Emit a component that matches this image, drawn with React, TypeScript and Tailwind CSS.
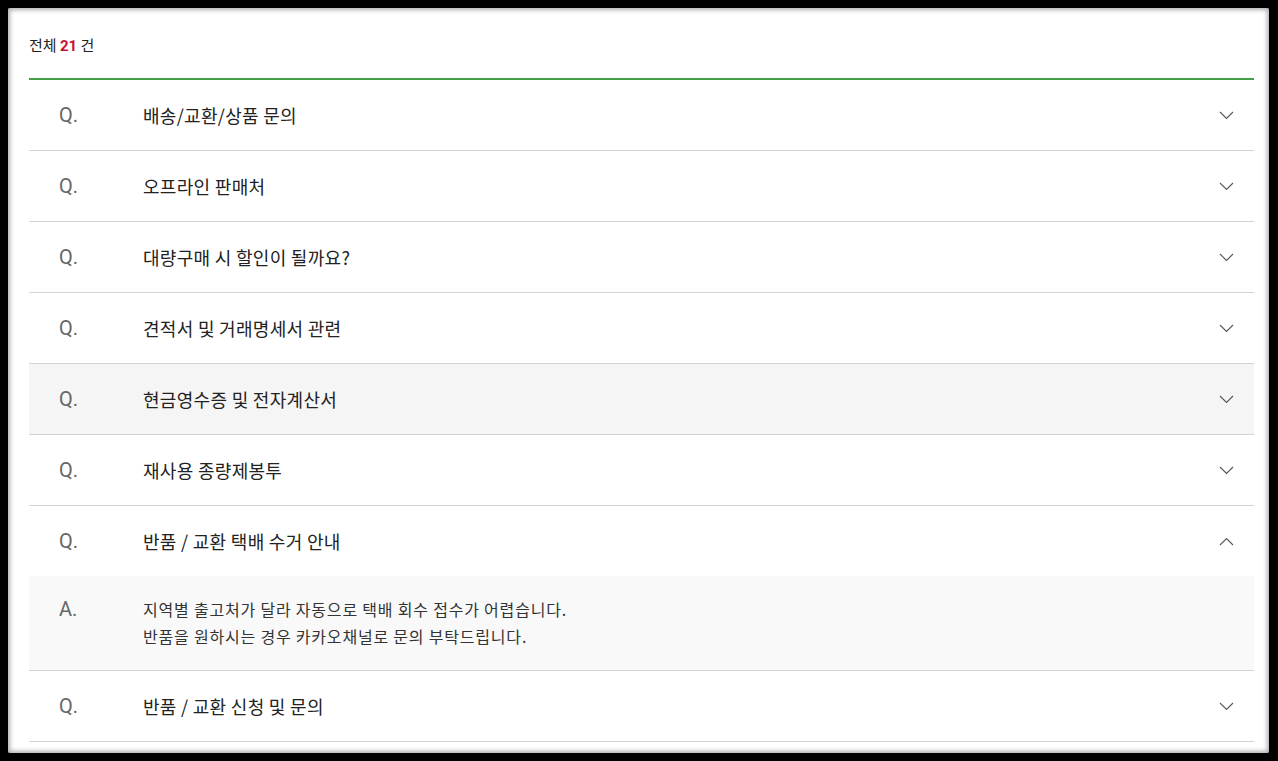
import { useState } from 'react';

interface FaqItem {
  question: string;
  answer?: string[];
}

const faqs: FaqItem[] = [
  { question: '배송/교환/상품 문의' },
  { question: '오프라인 판매처' },
  { question: '대량구매 시 할인이 될까요?' },
  { question: '견적서 및 거래명세서 관련' },
  { question: '현금영수증 및 전자계산서' },
  { question: '재사용 종량제봉투' },
  {
    question: '반품 / 교환 택배 수거 안내',
    answer: [
      '지역별 출고처가 달라 자동으로 택배 회수 접수가 어렵습니다.',
      '반품을 원하시는 경우 카카오채널로 문의 부탁드립니다.',
    ],
  },
  { question: '반품 / 교환 신청 및 문의' },
];

const latin = { fontFamily: 'Roboto, "Liberation Sans", sans-serif' };

const Chevron = ({ up }: { up: boolean }) => (
  <svg width="15" height="9" viewBox="0 0 15 9" fill="none" className="shrink-0">
    <polyline
      points={up ? '1,8 7.5,1.5 14,8' : '1,1 7.5,7.5 14,1'}
      stroke="#555"
      strokeWidth="1.1"
    />
  </svg>
);

export default function App() {
  const [openIndex, setOpenIndex] = useState<number | null>(6);
  const hoverIndex = 4;

  return (
    <div
      className="h-[761px] w-[1278px] overflow-hidden bg-black py-2 pl-2 pr-[9px]"
      style={{ fontFamily: '"Noto Sans CJK KR", Roboto, "Liberation Sans", sans-serif' }}
    >
      <div className="h-full rounded-[2px] bg-white pl-[21px] pr-[15px] shadow-[inset_0_0_4px_2px_rgba(120,120,120,0.6)]">
        {/* Count */}
        <div className="h-[70px] pt-[28px] text-[15px] leading-[18px] text-[#222]">
          전체 <span className="font-bold text-[#c8102e]" style={latin}>21</span> 건
        </div>

        {/* FAQ list */}
        <ul className="border-t-2 border-[#43a047]">
          {faqs.map((item, i) => {
            const open = openIndex === i;
            return (
              <li key={item.question} className="border-b border-[#d4d4d4]">
                <button
                  onClick={() => setOpenIndex(open ? null : i)}
                  className={`flex h-[70px] w-full items-center pl-[30px] pr-[20px] text-left ${
                    i === hoverIndex ? 'bg-[#f5f5f5]' : 'bg-white'
                  }`}
                >
                  <span className="w-[84px] shrink-0 text-[20px] text-[#666]" style={latin}>
                    Q.
                  </span>
                  <span className="flex-1 text-[18px] tracking-[0.3px] text-[#222]">{item.question}</span>
                  <Chevron up={open} />
                </button>
                {open && item.answer && (
                  <div className="flex bg-[#f9f9f9] py-[20px] pl-[30px] pr-[20px] text-[16px] leading-[27px] tracking-[0.8px] text-[#333]">
                    <span className="w-[84px] shrink-0 text-[20px] tracking-normal text-[#666]" style={latin}>
                      A.
                    </span>
                    <div>
                      {item.answer.map((line) => (
                        <p key={line}>{line}</p>
                      ))}
                    </div>
                  </div>
                )}
              </li>
            );
          })}
        </ul>
      </div>
    </div>
  );
}
